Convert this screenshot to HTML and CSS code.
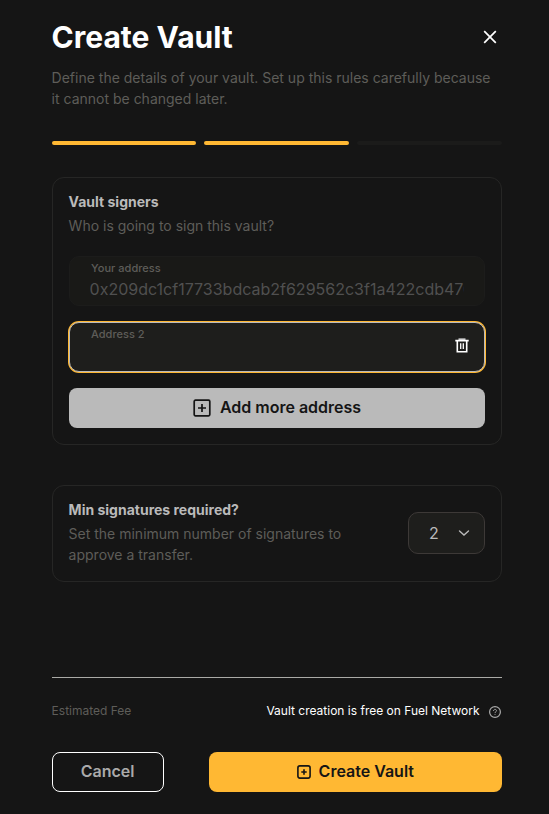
FILE: index.html
```html
<!DOCTYPE html>
<html lang="en">
<head>
<meta charset="utf-8">
<title>Create Vault</title>
<link rel="stylesheet" href="styles.css">
</head>
<body>
<main class="dialog">
  <header class="header">
    <h1 class="title">Create Vault</h1>
    <button class="close" aria-label="Close"><svg width="14" height="14" viewBox="0 0 14 14" fill="none" stroke="#fff" stroke-width="1.7"><path d="M1.2 1.2l11.6 11.6M12.8 1.2L1.2 12.8"/></svg></button>
  </header>
  <p class="muted intro">Define the details of your vault. Set up this rules carefully because it cannot be changed later.</p>
  <div class="steps"><span class="step done"></span><span class="step done"></span><span class="step"></span></div>

  <section class="card signers">
    <h2 class="card-title">Vault signers</h2>
    <p class="muted">Who is going to sign this vault?</p>
    <div class="field disabled">
      <span class="label">Your address</span>
      <span class="value">0x209dc1cf17733bdcab2f629562c3f1a422cdb4705</span>
    </div>
    <div class="field focused">
      <span class="label">Address 2</span>
      <svg class="trash" width="14" height="15" viewBox="0 0 14 15" fill="none" stroke="#fff"><path stroke-width="1.6" d="M0.3 2.6h13.4M2.3 2.6v11.2h9.4V2.6"/><path stroke-width="1.3" d="M3.5 1.1h7M5.7 5.2v5.8M8.3 5.2v5.8"/></svg>
    </div>
    <button class="btn add"><svg width="18" height="18" viewBox="0 0 18 18" fill="none" stroke="#151515" stroke-width="1.7"><rect x="1.2" y="1.2" width="15.6" height="15.6" rx="1.2"/><path d="M9 5v8M5 9h8"/></svg><span>Add more address</span></button>
  </section>

  <section class="card minimum">
    <div class="minimum-text">
      <h2 class="card-title">Min signatures required?</h2>
      <p class="muted">Set the minimum number of signatures to approve a transfer.</p>
    </div>
    <div class="select"><span>2</span><svg width="12" height="8" viewBox="0 0 12 8" fill="none" stroke="#bababa" stroke-width="1.4" stroke-linecap="round"><path d="M1.5 2L6 6l4.5-4"/></svg></div>
  </section>

  <footer class="footer">
    <div class="fee">
      <span class="fee-label">Estimated Fee</span>
      <span class="fee-value">Vault creation is free on Fuel Network</span>
      <svg class="help" width="12" height="12" viewBox="0 0 12 12" fill="none" stroke="#aaa"><circle cx="6" cy="6" r="5.4" stroke-width="1.2"/><path stroke-width="1" d="M4.5 4.9c0-2 3-2 3-.2C7.5 5.800 6 5.800 6 7M6 7.900v.9"/></svg>
    </div>
    <div class="actions">
      <button class="btn cancel"><span>Cancel</span></button>
      <button class="btn create"><svg width="14" height="14" viewBox="0 0 14 14" fill="none" stroke="#151515" stroke-width="1.6"><rect x=".9" y=".9" width="12.2" height="12.2" rx="2"/><path d="M7 4.300v5.400M4.300 7h5.400"/></svg><span>Create Vault</span></button>
    </div>
  </footer>
</main>
</body>
</html>
```
FILE: styles.css
```css
* { box-sizing: border-box; margin: 0; padding: 0; }
body {
  background: #151515;
  color: #fff;
  font: 14px/21px Inter, sans-serif;
}
button { font: inherit; background: none; border: 0; }
svg { display: block; flex: none; }
.dialog {
  display: flex;
  flex-direction: column;
  height: 814px;
  padding: 19px 47.4px 22px 51.6px;
}
.header { display: flex; justify-content: space-between; align-items: center; padding-right: 4.6px; }
.title { font-size: 30px; line-height: 36px; font-weight: 700; }
.muted { color: #5e5d59; }
.intro { margin-top: 12px; }
.steps { display: grid; grid-template-columns: repeat(3, 1fr); gap: 8px; margin-top: 32px; }
.step { height: 4px; border-radius: 2px; background: #1b1b1a; }
.done { background: #ffb833; }
.card { border: 1px solid #262625; border-radius: 12px; }
.card-title { font-size: 14px; line-height: 21px; font-weight: 700; color: #bababa; }
.card .muted { margin-top: 3px; }
.signers { height: 268px; margin-top: 32px; padding: 13px 16px; }
.field {
  display: flex;
  align-items: center;
  position: relative;
  height: 50px;
  padding: 0 20px;
  border-radius: 10px;
  background: #1e1e1c;
}
.label { position: absolute; left: 21.4px; top: 5px; font-size: 11px; line-height: 13px; font-weight: 500; letter-spacing: .03px; color: #5e5d59; }
.disabled { margin-top: 20px; background: #191917; border: 1px solid #1c1c1b; }
.value { font-size: 16px; line-height: 20px; margin-top: 16px; color: #505050; overflow: hidden; white-space: nowrap; }
.focused { margin-top: 16px; border: 1px solid #bababa; box-shadow: 0 0 0 1px #ffb833; }
.trash { margin: -4px -5.4px 0 auto; }
.btn { display: flex; align-items: center; justify-content: center; height: 40px; border-radius: 8px; font-size: 16px; line-height: 24px; font-weight: 600; }
.btn span { padding-bottom: 2px; }
.add { width: 100%; margin-top: 16px; padding-left: .8px; gap: 9px; background: #bababa; color: #151515; }
.minimum { display: flex; justify-content: space-between; align-items: center; height: 97px; margin-top: 40px; padding: 0 16px 2px; }
.minimum-text { width: 300px; padding-bottom: 1px; }
.select { display: flex; align-items: center; justify-content: space-between; width: 77px; height: 42px; padding: 0 14px 0 20.4px; border: 1px solid #3d3937; border-radius: 10px; background: #1e1e1c; color: #bababa; font-size: 16px; }
.select span { padding-top: 1px; }
.footer { margin-top: auto; border-top: 1px solid #aaaaa6; }
.fee { display: flex; align-items: center; font-size: 12px; line-height: 18px; padding-top: 24px; }
.fee-label { color: #5e5d59; }
.fee-value { margin-left: auto; }
.help { margin: 2px .6px 0 9.5px; }
.actions { display: flex; justify-content: space-between; margin-top: 32px; }
.cancel { width: 112px; border: 1px solid #fff; color: #aaa; }
.create { width: 293px; padding-left: .8px; gap: 7.6px; background: #ffb833; color: #151515; }
```
